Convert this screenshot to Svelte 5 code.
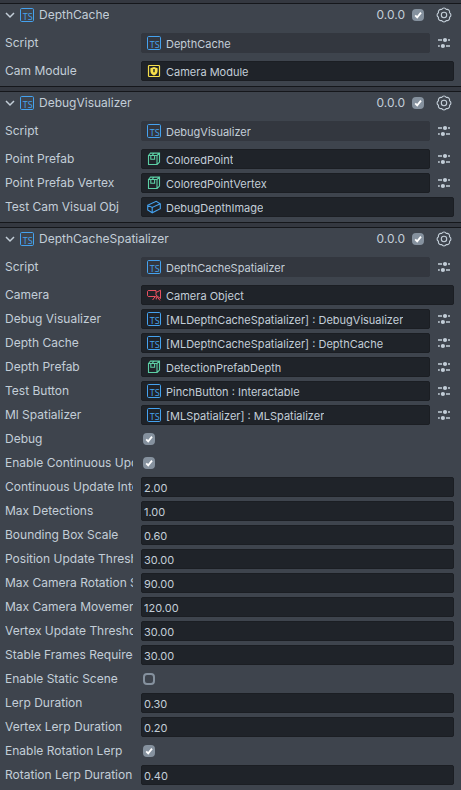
<script>
  const ref = (label, icon, value, preset = true) => ({ kind: 'ref', label, icon, value, preset });
  const num = (label, value) => ({ kind: 'num', label, value });
  const bool = (label, value) => ({ kind: 'bool', label, value });

  let components = $state([
    {
      name: 'DepthCache',
      enabled: true,
      open: true,
      rows: [ref('Cam Module', 'module', 'Camera Module', false)]
    },
    {
      name: 'DebugVisualizer',
      enabled: true,
      open: true,
      rows: [
        ref('Point Prefab', 'prefab', 'ColoredPoint'),
        ref('Point Prefab Vertex', 'prefab', 'ColoredPointVertex'),
        ref('Test Cam Visual Obj', 'mesh', 'DebugDepthImage', false)
      ]
    },
    {
      name: 'DepthCacheSpatializer',
      enabled: true,
      open: true,
      rows: [
        ref('Camera', 'camera', 'Camera Object', false),
        ref('Debug Visualizer', 'ts', '[MLDepthCacheSpatializer] : DebugVisualizer'),
        ref('Depth Cache', 'ts', '[MLDepthCacheSpatializer] : DepthCache'),
        ref('Depth Prefab', 'prefab', 'DetectionPrefabDepth'),
        ref('Test Button', 'ts', 'PinchButton : Interactable'),
        ref('Ml Spatializer', 'ts', '[MLSpatializer] : MLSpatializer'),
        bool('Debug', true),
        bool('Enable Continuous Update', true),
        num('Continuous Update Interval', '2.00'),
        num('Max Detections', '1.00'),
        num('Bounding Box Scale', '0.60'),
        num('Position Update Threshold', '30.00'),
        num('Max Camera Rotation Speed', '90.00'),
        num('Max Camera Movement', '120.00'),
        num('Vertex Update Threshold', '30.00'),
        num('Stable Frames Required', '30.00'),
        bool('Enable Static Scene', false),
        num('Lerp Duration', '0.30'),
        num('Vertex Lerp Duration', '0.20'),
        bool('Enable Rotation Lerp', true),
        num('Rotation Lerp Duration', '0.40')
      ]
    }
  ]);
</script>

{#snippet icon(kind)}
  <svg class="icon {kind}" viewBox="0 0 14 14" aria-hidden="true">
    {#if kind === 'ts'}
      <rect x="0.5" y="0.5" width="13" height="13" rx="1.2" />
      <text x="12.6" y="11.5" text-anchor="end">TS</text>
    {:else if kind === 'prefab'}
      <path d="M1.5 3.5h8.5v9h-8.5zM1.5 3.5l2-2.4h9v9l-2.5 2.4M10 3.5l2.5-2.4M3.8 3.5v3.8h3.8V3.5M5 3.5l2-2.4" />
    {:else if kind === 'mesh'}
      <path d="M0.7 5.2L9.2 1.3l4.1 2.4v5L5.2 12.8L0.7 10zM0.7 5.2l4.5 2.3l8.1-3.8M5.2 7.5v5.3" />
    {:else if kind === 'camera'}
      <path d="M9 4.5V2.5H1.2L0.5 3.2v4.6L1.2 8.5H8.2M9 4.5L13.5 2.2V10.5L9 7.2zM8.6 8L5.6 12M9.8 8.4L13 12.4M9.3 8.4v3" />
    {:else if kind === 'module'}
      <rect x="1.5" y="1.5" width="11" height="11" rx="0.8" />
      <path class="solid" d="M7 3L10.6 4.2V7C10.6 9 9.1 10.6 7 11.5C4.9 10.6 3.4 9 3.4 7V4.2z" />
      <path class="hole" d="M7 5v3.2" />
    {/if}
  </svg>
{/snippet}

{#snippet presetButton(label)}
  <button class="tool" type="button" aria-label="Presets for {label}">
    <svg class="sliders" viewBox="0 0 14 14" aria-hidden="true">
      <path d="M1 4h4M11 4h2M1 10h1.8M9 10h4" />
      <circle cx="8" cy="4" r="2.1" />
      <circle cx="5.9" cy="10" r="2.1" />
    </svg>
  </button>
{/snippet}

<main>
  {#each components as component, c}
    <section aria-label={component.name}>
      <header>
        <button
          class="title"
          type="button"
          aria-expanded={component.open}
          onclick={() => (component.open = !component.open)}
        >
          <svg class="chevron" class:closed={!component.open} viewBox="0 0 10 10" aria-hidden="true">
            <path d="M1 3l4 4l4-4" />
          </svg>
          {@render icon('ts')}
          <span>{component.name}</span>
        </button>
        <span class="version">0.0.0</span>
        <input type="checkbox" aria-label="Enable {component.name}" bind:checked={component.enabled} />
        <button class="tool" type="button" aria-label="{component.name} settings">
          <svg class="gear" viewBox="0 0 16 16" aria-hidden="true">
            <path d="M5.7 2.46A2.6 2.6 0 0 1 10.3 2.46A2.6 2.6 0 0 1 13.54 5.7A2.6 2.6 0 0 1 13.54 10.3A2.6 2.6 0 0 1 10.3 13.54A2.6 2.6 0 0 1 5.7 13.54A2.6 2.6 0 0 1 2.46 10.3A2.6 2.6 0 0 1 2.46 5.7A2.6 2.6 0 0 1 5.7 2.46z" />
            <circle cx="8" cy="8" r="2.7" />
          </svg>
        </button>
      </header>

      {#if component.open}
        <div class="row script">
          <label for="script-{c}">Script</label>
          <button class="field" type="button" id="script-{c}">
            {@render icon('ts')}<span>{component.name}</span>
          </button>
          {@render presetButton('Script')}
        </div>
        <div class="rows">
          {#each component.rows as row, r}
            <div class="row">
              <label for="f-{c}-{r}">{row.label}</label>
              {#if row.kind === 'ref'}
                <button class="field" type="button" id="f-{c}-{r}">
                  {@render icon(row.icon)}<span>{row.value}</span>
                </button>
                {#if row.preset}{@render presetButton(row.label)}{/if}
              {:else if row.kind === 'num'}
                <input class="field" type="text" inputmode="decimal" id="f-{c}-{r}" bind:value={row.value} />
              {:else}
                <input type="checkbox" id="f-{c}-{r}" bind:checked={row.value} />
              {/if}
            </div>
          {/each}
        </div>
      {/if}
    </section>
  {/each}
</main>

<style>
  :global(body) {
    margin: 0;
    background: #3e444d;
  }

  main {
    display: flex;
    flex-direction: column;
    gap: 4px;
    padding-top: 3px;
    background: #343840;
    color: #c3ced8;
    font: 12px/20px Inter, 'Liberation Sans', sans-serif;
  }

  section {
    border-top: 1px solid #15171b;
    border-bottom: 1px solid #15171b;
    background: #3e444d;
    padding: 0 7px 5px 5px;
  }

  section:last-child {
    border-bottom: 0;
  }

  header {
    display: flex;
    align-items: center;
    height: 22px;
    margin-bottom: 7px;
  }

  button,
  input {
    box-sizing: border-box;
    margin: 0;
    color: inherit;
    font: inherit;
  }

  button {
    display: flex;
    align-items: center;
    padding: 0;
    border: 0;
    background: none;
    text-align: left;
  }

  .title {
    flex: 1;
    min-width: 0;
    height: 22px;
  }

  .title .icon {
    margin: 0 5px;
  }

  .version {
    margin-right: 7px;
  }

  .tool {
    flex: none;
    justify-content: center;
    width: 20px;
    height: 20px;
    margin-left: 4px;
  }

  header .tool {
    margin-left: 10px;
  }

  .rows {
    display: flex;
    flex-direction: column;
    gap: 4px;
  }

  .row {
    display: flex;
    align-items: center;
    height: 20px;
  }

  .script {
    margin-bottom: 8px;
  }

  label {
    flex: none;
    width: 128px;
    margin-right: 8px;
    overflow: hidden;
    white-space: nowrap;
  }

  .field {
    flex: 1;
    min-width: 0;
    height: 20px;
    padding: 2px 5px 0;
    border: 1px solid #1b1e23;
    border-radius: 2px;
    background: #1f2329;
    font-size: 11px;
    line-height: 16px;
  }

  input.field {
    padding: 2px 2px 0;
    outline: none;
  }

  input.field:focus {
    border-color: #4aa3f0;
  }

  .field .icon {
    margin: -2px 5px 0 0;
  }

  .field span,
  .title span {
    overflow: hidden;
    white-space: nowrap;
  }

  .script .field {
    border-color: #33373f;
    background: #33373f;
  }

  input[type='checkbox'] {
    flex: none;
    width: 12px;
    height: 12px;
    appearance: none;
    border: 2px solid #85919e;
    border-radius: 4px;
  }

  .row input[type='checkbox'] {
    margin-left: 2px;
  }

  input[type='checkbox']:checked {
    background: #85919e
      url("data:image/svg+xml,%3Csvg xmlns='http://www.w3.org/2000/svg' viewBox='0 0 12 12'%3E%3Cpath d='M3.2 6.3l2 2.1L9 3.6' fill='none' stroke='white' stroke-width='1.8'/%3E%3C/svg%3E")
      center / 12px 12px no-repeat;
  }

  svg {
    flex: none;
    fill: none;
    stroke: currentColor;
  }

  .icon {
    width: 14px;
    height: 14px;
  }

  .icon.ts {
    color: #45a2ef;
  }

  .icon text {
    fill: currentColor;
    stroke: none;
    font: 9px 'Liberation Sans Narrow', 'Open Sans', sans-serif;
  }

  .icon.prefab {
    color: #5ccfa5;
    stroke-width: 1.1;
  }

  .icon.mesh {
    color: #45a2ef;
    stroke-width: 1.1;
  }

  .icon.camera {
    color: #e8505f;
    stroke-width: 1;
  }

  .icon.module {
    color: #f7e04b;
    stroke-width: 1.2;
  }

  .icon .solid {
    fill: currentColor;
    stroke: none;
  }

  .icon .hole {
    stroke: #1f2329;
    stroke-width: 1.4;
  }

  .chevron {
    width: 10px;
    height: 10px;
    stroke-width: 1.5;
  }

  .closed {
    transform: rotate(-90deg);
  }

  .gear {
    width: 16px;
    height: 16px;
    stroke-width: 1.1;
  }

  .sliders {
    width: 14px;
    height: 14px;
    stroke-width: 1.6;
  }

  .sliders circle {
    fill: currentColor;
    stroke: none;
  }
</style>
